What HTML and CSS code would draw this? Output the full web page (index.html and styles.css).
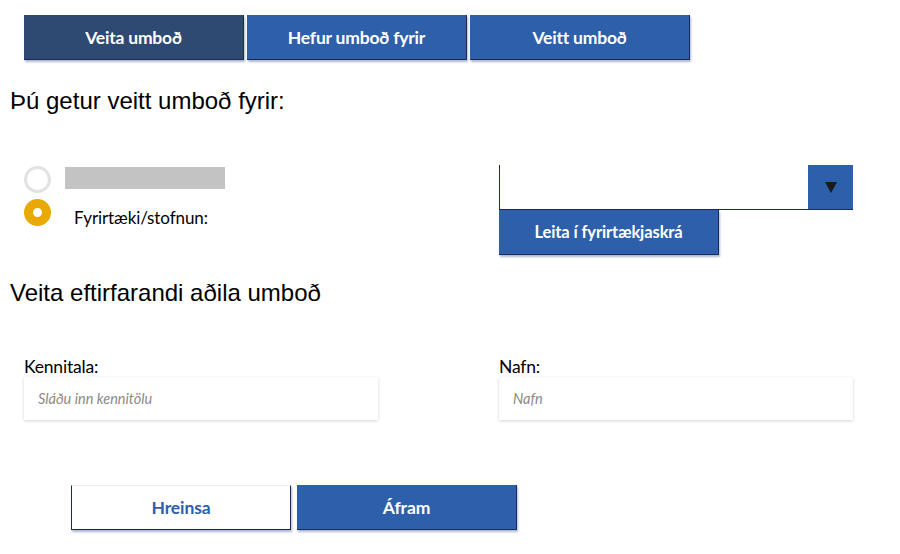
FILE: index.html
```html
<!DOCTYPE html>
<html lang="is">
<head>
<meta charset="utf-8">
<title>Umboð</title>
<link rel="stylesheet" href="styles.css">
</head>
<body>
<nav class="tabs">
  <div class="tab tab-active">Veita umboð</div>
  <div class="tab">Hefur umboð fyrir</div>
  <div class="tab">Veitt umboð</div>
</nav>

<h2 class="heading heading-first">Þú getur veitt umboð fyrir:</h2>

<section class="grid entity">
  <div class="radios">
    <div class="radio-row">
      <span class="radio"></span>
      <span class="masked"></span>
    </div>
    <div class="radio-row">
      <span class="radio radio-on"></span>
      <span class="radio-label">Fyrirtæki/stofnun:</span>
    </div>
  </div>
  <div class="lookup">
    <div class="select">
      <span class="select-value"></span>
      <span class="select-btn"><span class="tri"></span></span>
    </div>
    <button class="btn btn-blue btn-lookup">Leita í fyrirtækjaskrá</button>
  </div>
</section>

<h2 class="heading heading-second">Veita eftirfarandi aðila umboð</h2>

<section class="grid fields">
  <label class="field">
    <span class="field-label">Kennitala:</span>
    <span class="input"><span class="ph">Sláðu inn kennitölu</span></span>
  </label>
  <label class="field">
    <span class="field-label">Nafn:</span>
    <span class="input"><span class="ph">Nafn</span></span>
  </label>
</section>

<div class="actions">
  <button class="btn btn-white">Hreinsa</button>
  <button class="btn btn-blue">Áfram</button>
</div>
</body>
</html>
```

FILE: styles.css
```css
* { box-sizing: border-box; }
html, body { margin: 0; padding: 0; background: #fff; }
body {
  width: 900px;
  height: 554px;
  overflow: hidden;
  font-family: Lato, "Liberation Sans", Arial, sans-serif;
  color: #000;
}

.tabs {
  display: flex;
  gap: 3px;
  padding: 15px 0 0 24px;
}
.tab {
  width: 220px;
  height: 45px;
  background: #2e5fab;
  color: #fff;
  font-weight: 700;
  font-size: 17.5px;
  letter-spacing: -0.2px;
  display: flex;
  align-items: center;
  justify-content: center;
  border-right: 1px solid #1c2a5a;
  border-bottom: 1px solid #1c2a5a;
  box-shadow: 1px 2px 2px rgba(30, 50, 110, 0.35);
}
.tab-active { background: #2f4a72; }

.heading {
  font-family: "Liberation Sans", Arial, sans-serif;
  font-weight: 400;
  font-size: 24px;
  line-height: 24px;
  margin: 0;
  padding-left: 10px;
}
.heading-first { margin-top: 29px; }
.heading-second { margin-top: 26px; }

.grid {
  display: grid;
  grid-template-columns: 475px 354px;
  padding-left: 24px;
}

.entity { margin-top: 52px; }
.radios {
  display: flex;
  flex-direction: column;
  gap: 3px;
  padding-top: 1px;
}
.radio-row {
  display: flex;
  align-items: center;
}
.radio {
  width: 27px;
  height: 27px;
  border-radius: 50%;
  border: 3px solid #e2e2e2;
  background: #fff;
  flex: none;
}
.radio-on {
  border: 9px solid #e9a900;
}
.masked {
  width: 160px;
  height: 22px;
  background: #c3c3c3;
  margin-left: 14px;
  align-self: flex-start;
  margin-top: 1px;
}
.radio-label {
  font-size: 17px;
  letter-spacing: -0.1px;
  margin-left: 23px;
  margin-top: 11px;
}

.lookup {
  display: flex;
  flex-direction: column;
  align-items: flex-start;
}
.select {
  width: 354px;
  height: 45px;
  display: flex;
  border-left: 1px solid #1c2a5a;
  border-bottom: 1px solid #1c2a5a;
}
.select-value { flex: 1; }
.select-btn {
  width: 45px;
  height: 44px;
  background: #2e5fab;
  display: flex;
  align-items: center;
  justify-content: center;
}
.tri {
  width: 0;
  height: 0;
  border-left: 6px solid transparent;
  border-right: 6px solid transparent;
  border-top: 11px solid #1a1a1a;
}

.btn {
  width: 220px;
  height: 45px;
  font-family: Lato, "Liberation Sans", Arial, sans-serif;
  font-weight: 700;
  font-size: 17.5px;
  letter-spacing: -0.1px;
  padding: 0;
  border: none;
  border-right: 1px solid #1c2a5a;
  border-bottom: 1px solid #1c2a5a;
  box-shadow: 1px 2px 2px rgba(30, 50, 110, 0.35);
  cursor: pointer;
}
.btn-blue { background: #2e5fab; color: #fff; }
.btn-white {
  background: #fff;
  color: #2e5fab;
  border-left: 1px solid #1c2a5a;
  border-top: 1px solid #eeeeee;
}
.btn-lookup { font-size: 16.5px; }

.fields { margin-top: 52px; }
.field {
  display: flex;
  flex-direction: column;
  width: 354px;
}
.field-label {
  font-size: 17.5px;
  line-height: 20px;
  letter-spacing: -0.2px;
}
.input {
  margin-top: 0;
  height: 43px;
  background: #fff;
  box-shadow: 0 1px 3px rgba(0, 0, 0, 0.18);
  display: flex;
  align-items: center;
  padding-left: 14px;
}
.ph {
  font-style: italic;
  font-size: 14.5px;
  color: #8a8a8a;
}

.actions {
  display: flex;
  gap: 6px;
  padding-left: 71px;
  margin-top: 65px;
}
```
